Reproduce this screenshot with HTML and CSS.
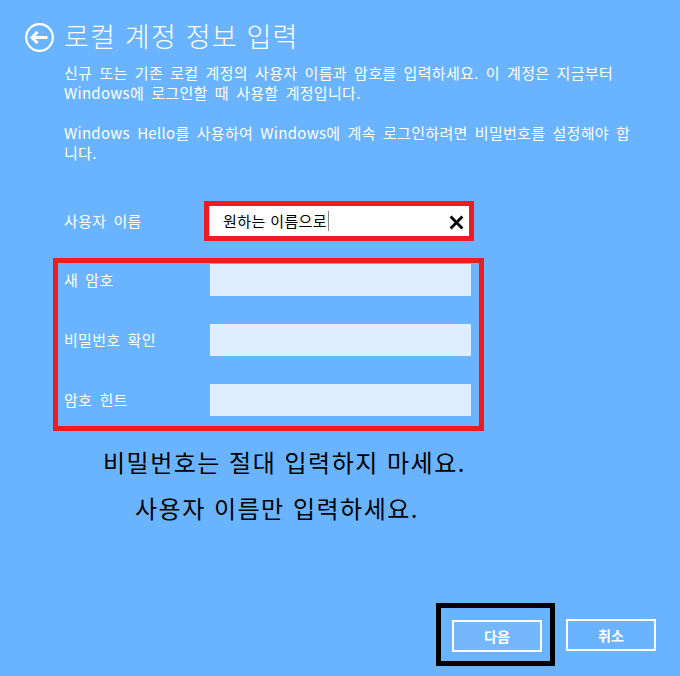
FILE: index.html
```html
<!DOCTYPE html>
<html lang="ko">
<head>
<meta charset="utf-8">
<link rel="stylesheet" href="styles.css">
</head>
<body>
<div class="page">
  <header class="head">
    <svg class="back" width="29" height="29" viewBox="0 0 29 29">
      <circle cx="14.5" cy="14.5" r="13.3" fill="none" stroke="#fff" stroke-width="2.2"/>
      <path d="M7 14.5 H22.5 M12.6 8.9 L7 14.5 L12.6 20.1" fill="none" stroke="#fff" stroke-width="3" stroke-linejoin="miter"/>
    </svg>
    <h1 class="title">로컬 계정 정보 입력</h1>
  </header>

  <div class="desc">
    <p>신규 또는 기존 로컬 계정의 사용자 이름과 암호를 입력하세요. 이 계정은 지금부터<br>Windows에 로그인할 때 사용할 계정입니다.</p>
    <p>Windows Hello를 사용하여 Windows에 계속 로그인하려면 비밀번호를 설정해야 합<br>니다.</p>
  </div>

  <div class="row user-row">
    <span class="label">사용자 이름</span>
    <div class="red-frame">
      <div class="text-input">
        <span class="typed">원하는 이름으로</span><span class="caret"></span>
        <svg class="clear" width="15" height="15" viewBox="0 0 15 15">
          <path d="M1.6 1.6 L13.4 13.4 M13.4 1.6 L1.6 13.4" stroke="#000" stroke-width="2.8" fill="none"/>
        </svg>
      </div>
    </div>
  </div>

  <div class="group">
    <div class="grow"><span class="label">새 암호</span><div class="pw-input"></div></div>
    <div class="grow"><span class="label">비밀번호 확인</span><div class="pw-input"></div></div>
    <div class="grow"><span class="label">암호 힌트</span><div class="pw-input"></div></div>
  </div>

  <div class="notice">
    <div class="n1">비밀번호는 절대 입력하지 마세요.</div>
    <div class="n2">사용자 이름만 입력하세요.</div>
  </div>

  <div class="actions">
    <div class="black-frame"><div class="btn next">다음</div></div>
    <div class="btn cancel">취소</div>
  </div>
</div>
</body>
</html>
```

FILE: styles.css
```css
html, body {
  margin: 0;
  padding: 0;
}
body {
  background: #6ab4ff;
  font-family: "Noto Sans CJK KR", "Noto Sans", sans-serif;
  color: #fff;
}
.page {
  width: 680px;
  height: 676px;
  display: flex;
  flex-direction: column;
  box-sizing: border-box;
  overflow: hidden;
}
.head {
  display: flex;
  align-items: center;
  padding: 23px 0 0 25px;
  height: 29px;
}
.back {
  display: block;
  margin-right: 10px;
}
.title {
  margin: 0;
  font-size: 27px;
  font-weight: 300;
  line-height: 28px;
  letter-spacing: 1.2px;
  position: relative;
  top: -2px;
}
.desc {
  margin: 11px 0 0 64px;
  font-size: 15px;
  line-height: 20px;
  letter-spacing: 0.3px;
  word-spacing: 2.7px;
}
.desc p {
  margin: 0 0 20px 0;
}
.desc p:last-child {
  margin-bottom: 0;
}
.row {
  display: flex;
  align-items: center;
}
.user-row {
  margin: 38px 0 0 64px;
}
.label {
  font-size: 15px;
  line-height: 20px;
  letter-spacing: 0.3px;
  word-spacing: 2.7px;
}
.user-row .label {
  width: 140px;
}
.red-frame {
  border: 5px solid #ed1c24;
  width: 260px;
  height: 30px;
}
.text-input {
  background: #fff;
  height: 30px;
  display: flex;
  align-items: center;
  padding-left: 13px;
  border-left: 1px solid #c8d8e8;
  box-sizing: border-box;
  color: #000;
}
.typed {
  font-size: 15px;
  line-height: 20px;
  letter-spacing: 0.4px;
}
.caret {
  width: 1px;
  height: 20px;
  background: #888;
  margin-left: 1px;
}
.clear {
  margin-left: auto;
  margin-right: 5px;
  position: relative;
  top: 1px;
}
.group {
  margin: 17px 0 0 53px;
  width: 407px;
  border: 5px solid #ed1c24;
  padding: 1px 8px 10px 6px;
  display: flex;
  flex-direction: column;
  gap: 28px;
}
.grow {
  display: flex;
  align-items: center;
}
.grow .label {
  width: 146px;
}
.pw-input {
  width: 261px;
  height: 32px;
  background: #dfeeff;
}
.notice {
  margin-top: 8px;
  color: #000;
  font-size: 24px;
  line-height: 46px;
  letter-spacing: 1.5px;
}
.n1 {
  padding-left: 103px;
}
.n2 {
  padding-left: 135px;
}
.actions {
  margin-top: auto;
  padding: 0 24px 10px 0;
  display: flex;
  justify-content: flex-end;
  align-items: center;
  gap: 11px;
}
.black-frame {
  border: 5px solid #000;
  padding: 12px 8px 9px 11px;
}
.btn {
  width: 90px;
  height: 32px;
  box-sizing: border-box;
  border: 2px solid #fff;
  display: flex;
  align-items: center;
  justify-content: center;
  font-size: 14px;
  font-weight: 700;
  color: #fff;
}
.next {
  background: #74b8fb;
}
```
